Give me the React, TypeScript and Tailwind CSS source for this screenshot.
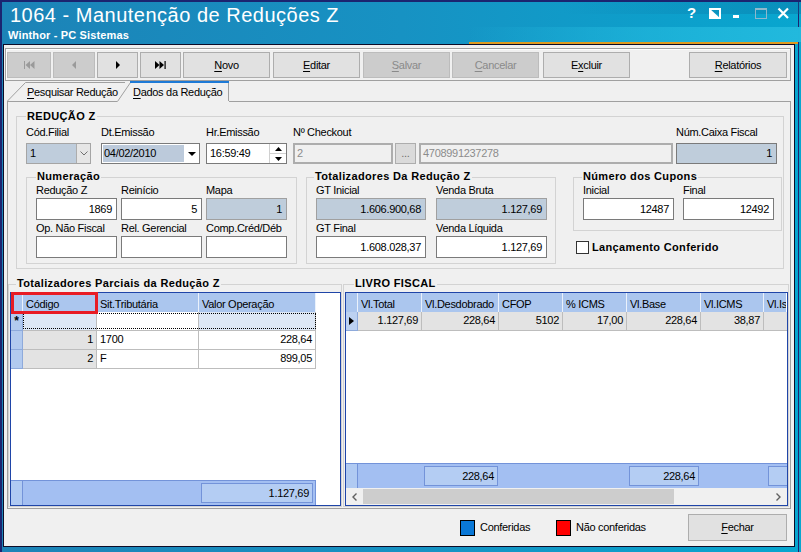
import React from "react";

type P = { cls?: string; children?: React.ReactNode };

const L = "h-[13px] leading-[13px] text-[11px] whitespace-nowrap";

function U({ children }: P) {
  return <span className="underline decoration-1 underline-offset-[2px]">{children}</span>;
}

function TBtn({ cls = "", disabled = false, children }: P & { disabled?: boolean }) {
  return (
    <div
      className={`${cls} h-[26px] shrink-0 flex items-center justify-center text-[11px] leading-[13px] border ${
        disabled ? "bg-[#cccccc] border-[#bcbcbc] text-[#8a8a8a]" : "bg-[#e1e1e1] border-[#adadad] text-black"
      }`}
    >
      {children}
    </div>
  );
}

function Group({ cls = "", legend, lcls = "", children }: P & { legend: string; lcls?: string }) {
  return (
    <div className={`relative shrink-0 border border-[#d3d3d3] ${cls}`}>
      <span
        className={`absolute px-[1px] bg-[#f0f0f0] text-[11px] leading-[13px] font-bold tracking-[0.35px] whitespace-nowrap ${lcls}`}
      >
        {legend}
      </span>
      {children}
    </div>
  );
}

function Inp({ cls = "", children }: P) {
  return (
    <div className={`h-[22px] border border-[#7a7a7a] flex items-center justify-end pr-[4px] text-[11px] leading-[13px] ${cls}`}>
      {children}
    </div>
  );
}

function Col({ cls = "", label, children }: P & { label: string }) {
  return (
    <div className={`flex flex-col shrink-0 ${cls}`}>
      <div className={L}>{label}</div>
      <div className="mt-[1px]">{children}</div>
    </div>
  );
}

const HC =
  "shrink-0 h-full bg-[#abc6ee] border-r border-[#eaf1fb] pl-[3px] pt-[5px] text-[11px] leading-[13px] whitespace-nowrap overflow-hidden";
const DC =
  "shrink-0 h-full border-r border-b border-[#bdbdbd] pt-[2px] text-[11px] leading-[13px] whitespace-nowrap overflow-hidden";
const IND = "shrink-0 w-[12px] h-full bg-[#b2caef] border-r border-b border-[#8eaadb]";

export default function App() {
  return (
    <div className="relative w-[801px] h-[552px] overflow-hidden flex flex-col border-l-2 border-t-2 border-[#1b2470] bg-[linear-gradient(90deg,#1c83b7_0%,#1792c3_50%,#08a6cf_100%)] font-['Liberation_Sans',Arial,sans-serif] tracking-[-0.3px] text-black">
      {/* decorative window chrome */}
      <div className="absolute right-[2px] top-0 bottom-0 w-px bg-[#1b2470]" />
      <div className="absolute left-[560px] right-0 top-0 h-[12px] bg-[linear-gradient(90deg,rgba(10,100,150,0)_0%,rgba(10,100,150,0.35)_100%)]" />
      <div className="absolute left-[466px] right-0 top-[25px] h-[15px] bg-[linear-gradient(90deg,rgba(40,190,225,0)_0%,rgba(40,190,225,0.5)_50%,#22b9dd_100%)]" />
      <div className="absolute left-[467px] right-[3px] top-[40px] h-[2px] bg-[#e09a1e]" />

      {/* title */}
      <div className="relative h-[42px] shrink-0 flex">
        <div className="flex flex-col">
          <div className="ml-[8px] mt-[2px] text-[20px] leading-[23px] tracking-[0.5px] text-white whitespace-nowrap">
            1064 - Manutenção de Reduções Z
          </div>
          <div className="ml-[6px] mt-[2px] text-[11px] leading-[13px] font-bold tracking-[0.15px] text-white whitespace-nowrap">
            Winthor - PC Sistemas
          </div>
        </div>
        <div className="ml-auto mr-[11px] mt-[2px] flex items-start">
          <span className="w-[13px] text-[15px] leading-[17px] font-bold tracking-normal text-white">?</span>
          <svg width="90" height="20" viewBox="0 0 90 20">
            <rect x="10" y="5" width="10" height="9" fill="none" stroke="#ffffff" strokeWidth="2" />
            <polygon points="9,4 9,15 21,15" fill="#ffffff" />
            <rect x="33" y="11" width="6" height="3" fill="#ffffff" />
            <rect x="55.5" y="4.5" width="11" height="10" fill="none" stroke="#8fb8cc" strokeWidth="1" />
            <rect x="55" y="4" width="12" height="2" fill="#8fb8cc" />
            <path d="M78.5,4.5 L88,14 M88,4.5 L78.5,14" stroke="#ffffff" strokeWidth="2.2" />
          </svg>
        </div>
      </div>

      {/* client area */}
      <div className="ml-[1px] mr-[6px] mb-[5px] flex-1 min-h-0 border border-[#0c0c28] bg-[#f0f0f0] flex flex-col">
        {/* toolbar */}
        <div className="mt-[3px] ml-[1px] w-[786px] h-[33px] shrink-0 border border-[#a0a0a0] shadow-[inset_1px_1px_0_#ffffff] flex items-start pt-[3px]">
          <TBtn cls="ml-[1px] w-[44px]" disabled>
            <svg width="11" height="8" viewBox="0 0 11 8">
              <rect x="0" y="0" width="1" height="8" fill="#9a9a9a" />
              <polygon points="1.5,4 6,0 6,8" fill="#9a9a9a" />
              <polygon points="6,4 10.5,0 10.5,8" fill="#9a9a9a" />
            </svg>
          </TBtn>
          <TBtn cls="ml-[2px] w-[42px]" disabled>
            <svg width="4" height="8" viewBox="0 0 4 8">
              <polygon points="0,4 4,0 4,8" fill="#9a9a9a" />
            </svg>
          </TBtn>
          <TBtn cls="ml-[2px] w-[41px]">
            <svg width="4" height="8" viewBox="0 0 4 8">
              <polygon points="0,0 4,4 0,8" fill="#000000" />
            </svg>
          </TBtn>
          <TBtn cls="ml-[2px] w-[41px]">
            <svg width="11" height="8" viewBox="0 0 11 8">
              <polygon points="0,0 4.5,4 0,8" fill="#000000" />
              <polygon points="4.5,0 9,4 4.5,8" fill="#000000" />
              <rect x="9.5" y="0" width="1.2" height="8" fill="#000000" />
            </svg>
          </TBtn>
          <TBtn cls="ml-[2px] w-[87px]">
            <U>N</U>ovo
          </TBtn>
          <TBtn cls="ml-[3px] w-[87px]">
            <U>E</U>ditar
          </TBtn>
          <TBtn cls="ml-[3px] w-[87px]" disabled>
            <U>S</U>alvar
          </TBtn>
          <TBtn cls="ml-[2px] w-[87px]" disabled>
            <U>C</U>ancelar
          </TBtn>
          <TBtn cls="ml-[4px] w-[87px]">
            E<U>x</U>cluir
          </TBtn>
          <TBtn cls="ml-[59px] w-[98px]">
            <U>R</U>elatórios
          </TBtn>
        </div>

        {/* tabs */}
        <div className="relative h-[20px] shrink-0">
          <svg className="absolute left-0 top-0 z-0" width="790" height="21" viewBox="0 0 790 21">
            <path d="M3,20 L21,1 L122,1 L122,20 Z" fill="#f0f0f0" />
            <path d="M3.5,20 L21.5,1.5 L121,1.5" fill="none" stroke="#a0a0a0" />
            <path d="M113,21 L126,0 L225,0 L225,21 Z" fill="#f0f0f0" />
            <path d="M113.5,20.5 L126.5,1.5" fill="none" stroke="#a0a0a0" />
            <rect x="126" y="0" width="99" height="2" fill="#1e7ad6" />
            <path d="M224.5,2 L224.5,20" fill="none" stroke="#a0a0a0" />
          </svg>
          <div className="relative z-10 flex pt-[5px] text-[11px] leading-[13px] whitespace-nowrap">
            <span className="ml-[23px] w-[106px] shrink-0">
              <U>P</U>esquisar Redução
            </span>
            <span>
              <U>D</U>ados da Redução
            </span>
          </div>
        </div>

        {/* tab panel */}
        <div className="ml-[3px] w-[784px] h-[408px] shrink-0 border border-[#a0a0a0] flex flex-col">
          <Group cls="ml-[8px] mt-[14px] w-[768px] h-[153px]" legend="REDUÇÃO Z" lcls="left-[9px] -top-[7px]">
            <div className="flex mt-[9px]">
              <div className="flex flex-col shrink-0 ml-[9px] w-[65px]">
                <div className={L}>Cód.Filial</div>
                <div className="mt-[4px] h-[21px] border border-[#a5a5a5] bg-[#bfcddc] flex items-stretch">
                  <div className="flex-1 pl-[3px] flex items-center text-[11px] leading-[13px]">1</div>
                  <div className="w-[14px] bg-[#e6e6e6] border-l border-[#adadad] flex items-center justify-center">
                    <svg width="8" height="5" viewBox="0 0 8 5">
                      <path d="M0.5,0.5 L4,4 L7.5,0.5" fill="none" stroke="#707070" strokeWidth="1" />
                    </svg>
                  </div>
                </div>
              </div>
              <div className="flex flex-col shrink-0 ml-[10px] w-[99px]">
                <div className={L}>Dt.Emissão</div>
                <div className="mt-[4px] h-[21px] border border-[#7a7a7a] bg-white flex items-stretch">
                  <div className="w-[81px] m-[1px] bg-[#bccadb] pl-[1px] flex items-center text-[11px] leading-[13px]">
                    04/02/2010
                  </div>
                  <div className="flex-1 flex items-center justify-center">
                    <svg width="8" height="4" viewBox="0 0 8 4">
                      <polygon points="0,0 8,0 4,4" fill="#000000" />
                    </svg>
                  </div>
                </div>
              </div>
              <div className="flex flex-col shrink-0 ml-[6px] w-[81px]">
                <div className={L}>Hr.Emissão</div>
                <div className="mt-[4px] h-[21px] border border-[#7a7a7a] bg-white flex items-stretch">
                  <div className="flex-1 pl-[3px] flex items-center text-[11px] leading-[13px]">16:59:49</div>
                  <div className="w-[17px] border-l border-[#d0d0d0] flex flex-col">
                    <div className="flex-1 flex items-center justify-center border-b border-[#d0d0d0]">
                      <svg width="7" height="4" viewBox="0 0 7 4">
                        <polygon points="3.5,0 7,4 0,4" fill="#000000" />
                      </svg>
                    </div>
                    <div className="flex-1 flex items-center justify-center">
                      <svg width="7" height="4" viewBox="0 0 7 4">
                        <polygon points="0,0 7,0 3.5,4" fill="#000000" />
                      </svg>
                    </div>
                  </div>
                </div>
              </div>
              <div className="flex flex-col shrink-0 ml-[6px] w-[100px]">
                <div className={L}>Nº Checkout</div>
                <div className="mt-[4px] h-[21px] border-2 border-[#adadad] bg-[#f0f0f0] pl-[2px] flex items-center text-[11px] leading-[13px] text-[#8c8c8c]">
                  2
                </div>
              </div>
              <div className="flex flex-col shrink-0 ml-[2px] w-[21px]">
                <div className="h-[13px]" />
                <div className="mt-[4px] h-[21px] border border-[#adadad] bg-[#dadada] flex items-center justify-center text-[11px] leading-[13px] text-[#6d6d6d]">
                  ...
                </div>
              </div>
              <div className="flex flex-col shrink-0 ml-[3px] w-[254px]">
                <div className="h-[13px]" />
                <div className="mt-[4px] h-[21px] border-2 border-[#adadad] bg-[#f0f0f0] pl-[2px] flex items-center text-[11px] leading-[13px] text-[#8c8c8c]">
                  4708991237278
                </div>
              </div>
              <div className="flex flex-col shrink-0 ml-[3px] w-[101px]">
                <div className={L}>Núm.Caixa Fiscal</div>
                <div className="mt-[4px] h-[21px] border border-[#7a7a7a] bg-[#bfcddb] pr-[4px] flex items-center justify-end text-[11px] leading-[13px]">
                  1
                </div>
              </div>
            </div>

            <div className="flex mt-[13px] items-start">
              <Group cls="ml-[9px] w-[271px] h-[87px]" legend="Numeração" lcls="left-[9px] -top-[8px]">
                <div className="flex pt-[6px]">
                  <Col cls="ml-[9px] w-[81px]" label="Redução Z">
                    <Inp cls="bg-white">1869</Inp>
                  </Col>
                  <Col cls="ml-[4px] w-[81px]" label="Reinício">
                    <Inp cls="bg-white">5</Inp>
                  </Col>
                  <Col cls="ml-[4px] w-[81px]" label="Mapa">
                    <Inp cls="bg-[#bfcddb] border-[#a0a0a0]">1</Inp>
                  </Col>
                </div>
                <div className="flex pt-[2px]">
                  <Col cls="ml-[9px] w-[81px]" label="Op. Não Fiscal">
                    <Inp cls="bg-white"></Inp>
                  </Col>
                  <Col cls="ml-[4px] w-[81px]" label="Rel. Gerencial">
                    <Inp cls="bg-white"></Inp>
                  </Col>
                  <Col cls="ml-[4px] w-[81px]" label="Comp.Créd/Déb">
                    <Inp cls="bg-white"></Inp>
                  </Col>
                </div>
              </Group>

              <Group cls="ml-[9px] w-[250px] h-[87px]" legend="Totalizadores Da Redução Z" lcls="left-[7px] -top-[8px]">
                <div className="flex pt-[6px]">
                  <Col cls="ml-[9px] w-[110px]" label="GT Inicial">
                    <Inp cls="bg-[#bfcddb] border-[#a0a0a0]">1.606.900,68</Inp>
                  </Col>
                  <Col cls="ml-[10px] w-[111px]" label="Venda Bruta">
                    <Inp cls="bg-[#bfcddb] border-[#a0a0a0]">1.127,69</Inp>
                  </Col>
                </div>
                <div className="flex pt-[2px]">
                  <Col cls="ml-[9px] w-[110px]" label="GT Final">
                    <Inp cls="bg-white">1.608.028,37</Inp>
                  </Col>
                  <Col cls="ml-[10px] w-[111px]" label="Venda Líquida">
                    <Inp cls="bg-white">1.127,69</Inp>
                  </Col>
                </div>
              </Group>

              <div className="ml-[17px] flex flex-col shrink-0">
                <Group cls="w-[209px] h-[54px]" legend="Número dos Cupons" lcls="left-[8px] -top-[8px]">
                  <div className="flex pt-[6px]">
                    <Col cls="ml-[9px] w-[91px]" label="Inicial">
                      <Inp cls="bg-white">12487</Inp>
                    </Col>
                    <Col cls="ml-[9px] w-[91px]" label="Final">
                      <Inp cls="bg-white">12492</Inp>
                    </Col>
                  </div>
                </Group>
                <div className="mt-[10px] ml-[3px] flex items-center">
                  <div className="w-[13px] h-[13px] border border-[#333333] bg-white shrink-0" />
                  <span className="ml-[3px] text-[11px] leading-[13px] font-bold tracking-[0.35px] whitespace-nowrap">
                    Lançamento Conferido
                  </span>
                </div>
              </div>
            </div>
          </Group>

          {/* bottom groups */}
          <div className="flex mt-[15px] h-[223px] shrink-0">
            <Group cls="w-[334px] h-[223px]" legend="Totalizadores Parciais da Redução Z" lcls="left-[7px] -top-[8px]">
              <div className="relative ml-[1px] mt-[7px] w-[331px] h-[214px] border border-[#1f45a8] bg-white flex flex-col">
                <div className="flex h-[19px] shrink-0">
                  <div className={`${HC} w-[12px] pl-0`} />
                  <div className={`${HC} w-[74px]`}>Código</div>
                  <div className={`${HC} w-[102px]`}>Sit.Tributária</div>
                  <div className={`${HC} w-[117px]`}>Valor Operação</div>
                </div>
                <div className="relative flex h-[19px] shrink-0">
                  <div className={`${IND} flex items-center justify-center text-[12px] leading-[12px] font-bold`}>*</div>
                  <div className={`${DC} w-[74px] bg-[#dde7f5]`} />
                  <div className={`${DC} w-[102px] bg-white`} />
                  <div className={`${DC} w-[117px] bg-[#dde7f5]`} />
                  <div className="absolute left-[12px] top-[1px] w-[293px] h-[16px] border border-dotted border-black" />
                </div>
                <div className="flex h-[19px] shrink-0">
                  <div className={IND} />
                  <div className={`${DC} w-[74px] bg-[#e3e3e3] text-right pr-[3px]`}>1</div>
                  <div className={`${DC} w-[102px] bg-white pl-[3px]`}>1700</div>
                  <div className={`${DC} w-[117px] bg-white text-right pr-[3px]`}>228,64</div>
                </div>
                <div className="flex h-[19px] shrink-0">
                  <div className={IND} />
                  <div className={`${DC} w-[74px] bg-[#e3e3e3] text-right pr-[3px]`}>2</div>
                  <div className={`${DC} w-[102px] bg-white pl-[3px]`}>F</div>
                  <div className={`${DC} w-[117px] bg-white text-right pr-[3px]`}>899,05</div>
                </div>
                <div className="flex-1" />
                <div className="h-[25px] w-[305px] shrink-0 flex items-center bg-[#a3bff2] border-t border-r border-[#7393d9]">
                  <div className="w-[12px] self-stretch bg-[#b0caf2] border-r border-[#7393d9]" />
                  <div className="ml-[178px] w-[112px] h-[20px] bg-[#b4cdf3] border border-[#7393d9] pr-[3px] flex items-center justify-end text-[11px] leading-[13px]">
                    1.127,69
                  </div>
                </div>
                <div className="absolute left-0 -top-[1px] w-[87px] h-[22px] border-[3px] border-[#e81c24]" />
              </div>
            </Group>

            <Group cls="ml-[1px] w-[446px] h-[223px]" legend="LIVRO FISCAL" lcls="left-[10px] -top-[8px]">
              <div className="ml-[1px] mt-[7px] w-[443px] h-[214px] border border-[#1f45a8] bg-white flex flex-col overflow-hidden">
                <div className="flex h-[19px] shrink-0">
                  <div className={`${HC} w-[12px] pl-0`} />
                  <div className={`${HC} w-[64px]`}>Vl.Total</div>
                  <div className={`${HC} w-[77px]`}>Vl.Desdobrado</div>
                  <div className={`${HC} w-[64px]`}>CFOP</div>
                  <div className={`${HC} w-[64px]`}>% ICMS</div>
                  <div className={`${HC} w-[74px]`}>Vl.Base</div>
                  <div className={`${HC} w-[63px] border-[#4a86e0]`}>Vl.ICMS</div>
                  <div className={`${HC} w-[22px] border-r-0`}>Vl.Is</div>
                </div>
                <div className="flex h-[19px] shrink-0">
                  <div className={`${IND} bg-[#bcd1f1] flex items-center justify-center`}>
                    <svg width="5" height="8" viewBox="0 0 5 8">
                      <polygon points="0,0 5,4 0,8" fill="#000000" />
                    </svg>
                  </div>
                  <div className={`${DC} w-[64px] bg-[#e3e3e3] text-right pr-[3px]`}>1.127,69</div>
                  <div className={`${DC} w-[77px] bg-[#e3e3e3] text-right pr-[3px]`}>228,64</div>
                  <div className={`${DC} w-[64px] bg-[#e3e3e3] text-right pr-[3px]`}>5102</div>
                  <div className={`${DC} w-[64px] bg-[#e3e3e3] text-right pr-[3px]`}>17,00</div>
                  <div className={`${DC} w-[74px] bg-[#e3e3e3] text-right pr-[3px]`}>228,64</div>
                  <div className={`${DC} w-[63px] bg-[#e3e3e3] text-right pr-[3px]`}>38,87</div>
                  <div className={`${DC} w-[70px] bg-[#e3e3e3]`} />
                </div>
                <div className="flex-1" />
                <div className="h-[25px] shrink-0 flex items-center bg-[#a3bff2] border-t border-[#7393d9]">
                  <div className="w-[12px] shrink-0 self-stretch bg-[#b0caf2] border-r border-[#7393d9]" />
                  <div className="ml-[66px] w-[74px] shrink-0 h-[20px] bg-[#b4cdf3] border border-[#7393d9] pr-[3px] flex items-center justify-end text-[11px] leading-[13px]">
                    228,64
                  </div>
                  <div className="ml-[131px] w-[70px] shrink-0 h-[20px] bg-[#b4cdf3] border border-[#7393d9] pr-[3px] flex items-center justify-end text-[11px] leading-[13px]">
                    228,64
                  </div>
                  <div className="ml-[69px] w-[40px] shrink-0 h-[20px] bg-[#b4cdf3] border border-[#7393d9]" />
                </div>
                <div className="h-[17px] shrink-0 flex items-center bg-[#f0f0f0]">
                  <div className="w-[17px] h-full flex items-center justify-center">
                    <svg width="5" height="8" viewBox="0 0 5 8">
                      <path d="M4.5,0.5 L1,4 L4.5,7.5" fill="none" stroke="#606060" strokeWidth="1.4" />
                    </svg>
                  </div>
                  <div className="w-[311px] h-[15px] bg-[#cdcdcd]" />
                  <div className="ml-auto w-[17px] h-full flex items-center justify-center">
                    <svg width="5" height="8" viewBox="0 0 5 8">
                      <path d="M0.5,0.5 L4,4 L0.5,7.5" fill="none" stroke="#606060" strokeWidth="1.4" />
                    </svg>
                  </div>
                </div>
              </div>
            </Group>
          </div>
        </div>

        {/* bottom bar */}
        <div className="mt-[5px] h-[27px] shrink-0 flex items-center">
          <div className="ml-[456px] w-[15px] h-[16px] shrink-0 border border-black bg-[#0a78d7]" />
          <span className="ml-[5px] w-[71px] shrink-0 text-[11px] leading-[13px] whitespace-nowrap">Conferidas</span>
          <div className="ml-[5px] w-[15px] h-[16px] shrink-0 border border-black bg-[#ff0000]" />
          <span className="ml-[5px] w-[107px] shrink-0 text-[11px] leading-[13px] whitespace-nowrap">Não conferidas</span>
          <div className="ml-[5px] w-[99px] h-[27px] shrink-0 bg-[#e1e1e1] border border-[#adadad] flex items-center justify-center text-[11px] leading-[13px]">
            <U>F</U>echar
          </div>
        </div>
      </div>
    </div>
  );
}
